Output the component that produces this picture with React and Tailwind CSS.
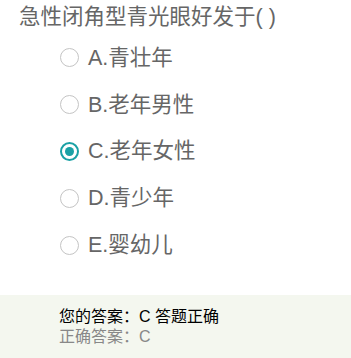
import React from "react";

const options = [
  { key: "A", text: "青壮年" },
  { key: "B", text: "老年男性" },
  { key: "C", text: "老年女性", checked: true },
  { key: "D", text: "青少年" },
  { key: "E", text: "婴幼儿" },
];

export default function App() {
  return (
    <div
      className="w-[351px] h-[358px] bg-white flex flex-col overflow-hidden"
      style={{ fontFamily: '"Liberation Sans", "Noto Sans CJK SC", sans-serif' }}
    >
      <div className="pl-[19px] pt-[3px] text-[21.5px] leading-[28px] text-[#666666]">
        急性闭角型青光眼好发于( )
      </div>
      <div className="flex flex-col pl-[60px] pt-[3.5px]">
        {options.map((o) => (
          <div key={o.key} className="h-[46.8px] flex items-center gap-[9px]">
            {o.checked ? (
              <span className="w-[19px] h-[19px] rounded-full border-2 border-[#1aa1a5] flex items-center justify-center">
                <span className="w-[9px] h-[9px] rounded-full bg-[#1aa1a5]" />
              </span>
            ) : (
              <span className="w-[19px] h-[19px] rounded-full border-[1.5px] border-[#c4c4c4]" />
            )}
            <span className="text-[21.5px] leading-[28px] text-[#666666]">
              {o.key}.{o.text}
            </span>
          </div>
        ))}
      </div>
      <div className="mt-auto h-[63px] bg-[#f4f7ef] pl-[59px] pt-[12px] text-[16px] leading-[20px]">
        <div className="text-black">您的答案：C 答题正确</div>
        <div className="text-[#888888]">正确答案：C</div>
      </div>
    </div>
  );
}
